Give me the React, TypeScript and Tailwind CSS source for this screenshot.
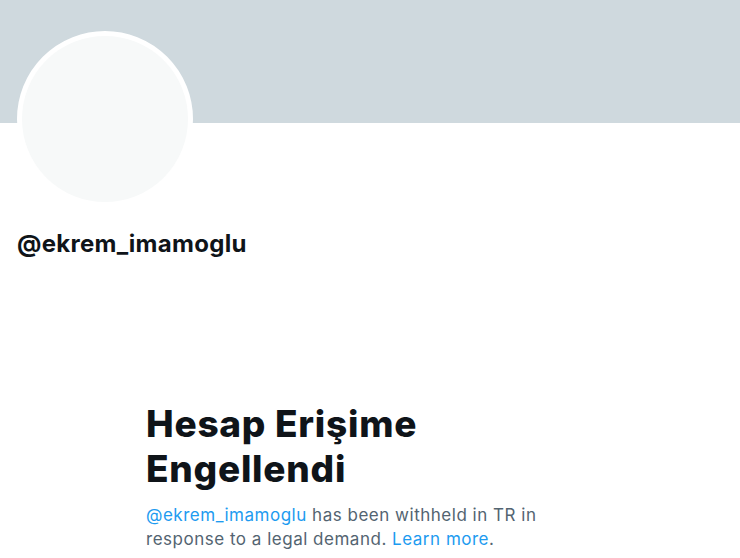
export default function App() {
  return (
    <div className="h-[558px] w-[740px] overflow-hidden bg-white font-['Inter',sans-serif] text-[#0f1419]">
      <div className="h-[123px] bg-[#cfd9de]" />
      <div className="px-[17px]">
        <div className="-mt-[92px] h-[176px] w-[176px] rounded-full border-[5px] border-white bg-[#f7f9f9]" />
        <div className="mt-[22px] text-[24px] font-bold leading-[30px] tracking-[0.012em]">@ekrem_imamoglu</div>
      </div>
      <div className="ml-[146px] mt-[142px] max-w-[400px]">
        <h1 className="text-[37px] font-extrabold leading-[45px] tracking-[0.02em]">Hesap Erişime Engellendi</h1>
        <p className="mt-[12px] text-[17px] leading-[24px] tracking-[0.03em] text-[#536471]">
          <span className="text-[#1d9bf0]">@ekrem_imamoglu</span> has been withheld in TR in response to a legal demand.{' '}
          <span className="text-[#1d9bf0]">Learn more</span>.
        </p>
      </div>
    </div>
  );
}
